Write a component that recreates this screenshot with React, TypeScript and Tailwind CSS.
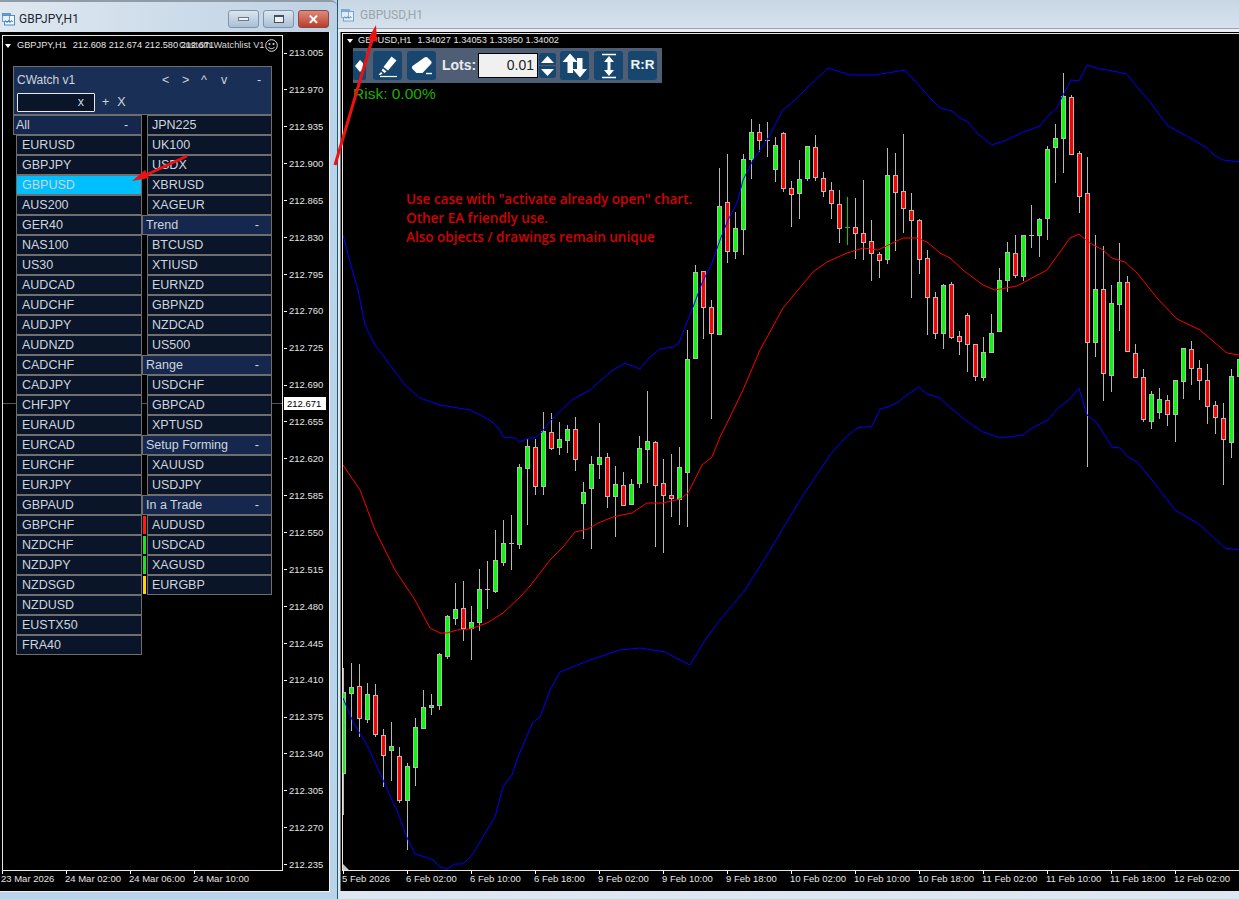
import React from 'react';

// [high, bodyTop, bodyBottom, low, kind]  kind: 1 bull, -1 bear, 0 doji, 2 green doji
const candles: [number, number, number, number, number][] = [
  [668, 692, 773, 815, 1], [663, 687, 693, 731, 1], [664, 686, 718, 737, -1], [683, 694, 719, 723, 1],
  [684, 695, 734, 737, -1], [729, 735, 755, 787, -1], [722, 746, 750, 781, 1], [747, 756, 800, 803, -1],
  [763, 766, 800, 850, 1], [718, 727, 767, 786, 1], [690, 707, 728, 729, 1], [694, 705, 707, 715, 1],
  [653, 654, 705, 710, 1], [615, 616, 656, 659, 1], [583, 609, 618, 625, 1], [581, 608, 628, 641, -1],
  [606, 622, 628, 660, 1], [569, 589, 622, 631, 1], [561, 589, 589, 609, 0], [530, 560, 591, 593, 1],
  [520, 543, 562, 566, 1], [515, 543, 543, 570, 0], [464, 467, 544, 549, 1], [439, 446, 468, 525, 1],
  [439, 447, 486, 495, -1], [412, 431, 486, 495, 1], [413, 432, 448, 450, -1], [422, 439, 447, 455, 1],
  [425, 429, 440, 453, 1], [417, 429, 459, 471, -1], [482, 492, 503, 539, 1], [456, 464, 488, 549, 1],
  [423, 457, 464, 479, 1], [453, 457, 496, 508, -1], [466, 484, 496, 537, 1], [472, 485, 505, 505, -1],
  [479, 484, 504, 505, 1], [436, 448, 483, 488, 1], [391, 441, 449, 483, 1], [441, 442, 485, 547, -1],
  [459, 483, 495, 553, -1], [454, 495, 498, 517, -1], [447, 467, 499, 525, 1], [330, 359, 472, 527, 1],
  [265, 272, 358, 358, 1], [271, 271, 307, 339, -1], [300, 307, 333, 419, -1], [168, 206, 334, 334, 1],
  [154, 202, 251, 263, -1], [212, 228, 251, 259, 1], [154, 159, 229, 255, 1], [119, 132, 159, 179, 1],
  [124, 132, 140, 152, -1], [122, 140, 140, 157, 0], [137, 145, 169, 182, 1], [132, 133, 188, 192, -1],
  [181, 188, 194, 227, -1], [160, 179, 193, 219, 1], [146, 146, 178, 181, 1], [135, 147, 177, 181, -1],
  [172, 178, 191, 197, -1], [182, 190, 203, 219, -1], [190, 204, 228, 243, -1], [197, 227, 227, 245, 2],
  [198, 227, 233, 259, -1], [180, 233, 242, 260, -1], [220, 241, 253, 281, -1], [252, 254, 260, 278, -1],
  [148, 175, 259, 264, 1], [153, 175, 192, 251, -1], [134, 191, 208, 233, -1], [193, 210, 220, 298, -1],
  [219, 220, 259, 274, -1], [250, 258, 297, 335, -1], [292, 297, 333, 339, -1], [284, 285, 333, 349, 1],
  [282, 284, 337, 339, -1], [331, 336, 341, 355, -1], [313, 315, 344, 372, -1], [344, 344, 376, 381, -1],
  [337, 352, 377, 381, 1], [314, 333, 352, 353, 1], [268, 280, 331, 332, 1], [242, 252, 280, 292, 1],
  [235, 253, 275, 278, -1], [235, 235, 276, 281, 1], [205, 235, 235, 248, 0], [218, 219, 235, 257, 1],
  [146, 149, 218, 240, 1], [124, 138, 147, 183, 1], [73, 96, 138, 173, 1], [95, 97, 154, 155, -1],
  [151, 153, 196, 213, -1], [157, 193, 342, 467, -1], [235, 289, 342, 357, 1], [246, 289, 373, 401, -1],
  [285, 303, 375, 392, 1], [243, 282, 304, 331, 1], [276, 282, 351, 351, -1], [344, 353, 377, 377, -1],
  [369, 377, 419, 422, -1], [391, 394, 421, 429, 1], [388, 399, 412, 419, 1], [395, 400, 414, 426, -1],
  [380, 380, 414, 442, 1], [348, 348, 381, 399, 1], [341, 349, 368, 385, -1], [360, 368, 380, 400, -1],
  [364, 380, 406, 424, -1], [401, 405, 417, 434, -1], [403, 418, 439, 485, -1], [369, 376, 442, 458, 1],
  [340, 359, 376, 400, 1],
];

const upperBand =
  '343,235 350,262 358,290 365,325 375,345 390,365 405,385 420,398 440,405 470,410 490,420 500,430 503,437 515,438 519,442 530,438 535,438 541,433 551,420 572,400 590,390 610,372 625,363 640,369 650,357 660,349 673,347 679,343 685,327 693,307 702,283 712,263 720,240 728,220 737,203 743,180 753,160 767,140 783,110 795,100 810,85 828,68 850,75 875,75 905,70 932,100 940,108 952,111 960,118 968,122 977,133 992,145 1007,140 1023,132 1040,126 1047,117 1057,108 1063,95 1071,80 1079,81 1087,65 1100,69 1113,71 1127,74 1137,87 1150,102 1168,126 1187,136 1207,148 1215,156 1223,160 1239,162';
const middleBand =
  '343,465 360,490 375,530 395,570 415,600 430,628 440,633 447,633 457,630 470,629 487,623 503,613 520,597 530,586 550,560 563,547 575,532 588,529 598,523 613,517 632,513 647,503 663,503 680,499 688,493 702,465 712,457 720,437 730,417 743,390 760,350 783,308 813,272 827,262 847,253 863,248 878,250 903,238 917,238 927,242 940,253 950,258 963,270 983,285 995,290 1017,286 1047,270 1070,238 1079,234 1088,242 1103,250 1112,258 1125,262 1137,273 1157,298 1177,319 1200,330 1227,353 1239,355';
const lowerBand =
  '343,698 353,722 368,747 383,780 398,813 408,840 415,854 432,859 440,867 447,869 455,864 463,864 472,855 495,817 503,787 512,775 518,757 533,722 540,717 550,690 560,672 590,660 620,650 640,648 665,652 690,665 705,640 720,620 745,590 770,550 800,500 830,455 843,440 857,428 872,426 880,409 888,407 897,403 907,395 919,387 927,394 940,398 952,409 968,422 983,432 1000,438 1023,435 1032,428 1048,420 1057,409 1070,399 1079,388 1087,415 1097,423 1112,447 1120,448 1128,457 1137,462 1152,480 1175,510 1200,525 1225,548 1239,550';

const prices = [
  '213.005', '212.970', '212.935', '212.900', '212.865', '212.830', '212.795', '212.760', '212.725', '212.690', '212.655', '212.620',
  '212.585', '212.550', '212.515', '212.480', '212.445', '212.410', '212.375', '212.340', '212.305', '212.270', '212.235',
];

const leftList = [
  'EURUSD', 'GBPJPY', 'GBPUSD', 'AUS200', 'GER40', 'NAS100', 'US30', 'AUDCAD', 'AUDCHF', 'AUDJPY', 'AUDNZD', 'CADCHF', 'CADJPY', 'CHFJPY',
  'EURAUD', 'EURCAD', 'EURCHF', 'EURJPY', 'GBPAUD', 'GBPCHF', 'NZDCHF', 'NZDJPY', 'NZDSGD', 'NZDUSD', 'EUSTX50', 'FRA40',
];

type RightRow = { label: string; header?: boolean; strip?: string };
const rightList: RightRow[] = [
  { label: 'JPN225' }, { label: 'UK100' }, { label: 'USDX' }, { label: 'XBRUSD' }, { label: 'XAGEUR' },
  { label: 'Trend', header: true },
  { label: 'BTCUSD' }, { label: 'XTIUSD' }, { label: 'EURNZD' }, { label: 'GBPNZD' }, { label: 'NZDCAD' }, { label: 'US500' },
  { label: 'Range', header: true },
  { label: 'USDCHF' }, { label: 'GBPCAD' }, { label: 'XPTUSD' },
  { label: 'Setup Forming', header: true },
  { label: 'XAUUSD' }, { label: 'USDJPY' },
  { label: 'In a Trade', header: true },
  { label: 'AUDUSD', strip: 'bg-[#ff1a1a]' }, { label: 'USDCAD', strip: 'bg-[#1fe01f]' }, { label: 'XAGUSD', strip: 'bg-[#1fe01f]' }, { label: 'EURGBP', strip: 'bg-[#ffd800]' },
];

const WindowIcon = ({ faded }: { faded?: boolean }) => (
  <svg width="13" height="14" viewBox="0 0 13 14" className={faded ? 'opacity-70' : ''}>
    <rect x="0.5" y="1.5" width="8" height="3" fill="#5b9bd8" stroke="#3c78b8" strokeWidth="0.6" />
    <rect x="2.5" y="3.5" width="10" height="9.5" fill="#f4f8fc" stroke="#4f8ac6" />
    <rect x="0.5" y="3.5" width="7" height="6" fill="#e8f1fa" stroke="#4f8ac6" strokeWidth="0.8" />
    <path d="M3.5 8.5l1.5 2 1.5-2 1.5 2 1.5-2 1 1.5" fill="none" stroke="#2d6fb4" strokeWidth="1" />
  </svg>
);

const CaptionButton = ({ children, close }: { children: React.ReactNode; close?: boolean }) => (
  <div
    className={`w-[31px] h-[18px] rounded-[3px] border flex items-center justify-center ${
      close ? 'border-[#8a4a44] bg-linear-to-b from-[#dc8a7c] to-[#bb3a2a]' : 'border-[#7f95ab] bg-linear-to-b from-[#dbe6f0] to-[#a9bfd4]'
    }`}
  >
    {children}
  </div>
);

const PanelRow = ({ label, active, inset }: { label: string; active?: boolean; inset: string }) => (
  <div className={`h-[20px] flex-1 flex items-center border border-[#6e6e6e] ${inset} ${active ? 'bg-[#00bfff]' : 'bg-[#0b1529]'}`}>
    {label}
  </div>
);

const PanelHeader = ({ label, dashClass, inset }: { label: string; dashClass: string; inset: string }) => (
  <div className={`h-[20px] flex items-center border border-[#6e6e6e] bg-[#16274d] ${inset}`}>
    <span>{label}</span>
    <span className={dashClass}>-</span>
  </div>
);

const Watchlist = () => (
  <div className="absolute left-[10px] top-[30px] w-[259px] text-[12.5px] text-[#cdd5dd] leading-none">
    <div className="h-[49px] border border-[#6e6e6e] bg-[#1a2f55] pl-[3px] pt-[7px]">
      <div className="flex h-[12px] items-center">
        <span className="w-[145px] text-[12px]">CWatch v1</span>
        <span className="w-[20px]">&lt;</span>
        <span className="w-[19px]">&gt;</span>
        <span className="w-[20px]">^</span>
        <span className="w-[36px]">v</span>
        <span>-</span>
      </div>
      <div className="flex items-center mt-[7px]">
        <div className="w-[78px] h-[19px] rounded-[1px] border border-[#e8e8e8] bg-[#0b1529] flex items-center justify-end pr-[10px]">x</div>
        <span className="ml-[7px]">+</span>
        <span className="ml-[8px]">X</span>
      </div>
    </div>
    <div className="flex">
      <div className="w-[129px] flex flex-col">
        <PanelHeader label="All" dashClass="ml-[94px]" inset="pl-[2px]" />
        {leftList.map((s) => (
          <div key={s} className="flex pl-[3px]">
            <PanelRow label={s} active={s === 'GBPUSD'} inset="pl-[5px]" />
          </div>
        ))}
      </div>
      <div className="w-[130px] flex flex-col">
        {rightList.map((r) =>
          r.header ? (
            <PanelHeader key={r.label} label={r.label} dashClass="ml-auto mr-[12px]" inset="pl-[3px]" />
          ) : (
            <div key={r.label} className="flex items-stretch">
              <div className="w-[5px] flex pl-px">
                {r.strip && <div className={`w-[3px] h-[18px] mt-px ${r.strip}`} />}
              </div>
              <PanelRow label={r.label} inset="pl-[4px]" />
            </div>
          ),
        )}
      </div>
    </div>
  </div>
);

const ToolButton = ({ children, className }: { children: React.ReactNode; className: string }) => (
  <div className={`w-[29px] h-[29px] rounded-[3px] bg-[#17476f] flex items-center justify-center ${className}`}>{children}</div>
);

const Toolbar = () => (
  <div className="absolute left-[10px] top-[14px] w-[309px] h-[35px] bg-[#4f5d75] flex items-center">
    <div className="w-[13px] h-[29px] rounded-[2px] bg-[#17476f] flex items-center overflow-hidden">
      <svg width="13" height="18" viewBox="0 0 13 18">
        <path d="M2 9l5-6 3 3v6l-3 3z" fill="#fff" />
      </svg>
    </div>
    <ToolButton className="ml-[7px]">
      <svg width="22" height="24" viewBox="0 0 22 24">
        <path d="M14.5 2.5l5 4-8.5 10-4.5-3.5z" fill="#fff" />
        <path d="M6 14.5l3.5 3-2 1.5-3-2.5z" fill="#fff" />
        <path d="M4 18l1.5 1.5-2 1.5H1.5z" fill="#fff" />
        <path d="M3 22.5h17" stroke="#fff" strokeWidth="1.2" />
      </svg>
    </ToolButton>
    <ToolButton className="ml-[5px]">
      <svg width="24" height="22" viewBox="0 0 24 22">
        <path d="M14.5 2.5c1-.8 2-.8 3 0l3.5 3.5c.8 1 .8 2 0 3L12.5 18H6.5l-4-4c-.8-1-.8-2 0-3z" fill="#fff" />
        <path d="M16 18.5h6" stroke="#fff" strokeWidth="1.4" />
      </svg>
    </ToolButton>
    <span className="ml-[6px] w-[36px] text-[14px] font-bold text-[#e8ecf0]">Lots:</span>
    <div className="w-[60px] h-[25px] border border-black bg-[#f0f0f0] flex items-center justify-end pr-[3px] text-[14px] text-[#222]">0.01</div>
    <div className="ml-px w-[17px] flex flex-col gap-px">
      <div className="h-[12px] rounded-t-[3px] bg-[#17476f] flex items-center justify-center">
        <svg width="13" height="7" viewBox="0 0 13 7"><path d="M6.5 0l6.5 7H0z" fill="#fff" /></svg>
      </div>
      <div className="h-[12px] rounded-b-[3px] bg-[#17476f] flex items-center justify-center">
        <svg width="13" height="7" viewBox="0 0 13 7"><path d="M0 0h13L6.5 7z" fill="#fff" /></svg>
      </div>
    </div>
    <ToolButton className="ml-[4px]">
      <svg width="26" height="25" viewBox="0 0 26 25">
        <path d="M8 0.500l7.500 8.500h-4.500v11h-5.500V9H0.500z" fill="#fff" />
        <path d="M18 24.500l-7.500-8.500h4.500V5h5.500v11h4.500z" fill="#fff" />
      </svg>
    </ToolButton>
    <ToolButton className="ml-[5px]">
      <svg width="18" height="26" viewBox="0 0 18 26">
        <path d="M2 1.500h14M2 24.500h14" stroke="#fff" strokeWidth="1.5" />
        <path d="M9 3l5 6h-3.500v8H14l-5 6-5-6h3.500V9H4z" fill="#fff" />
      </svg>
    </ToolButton>
    <ToolButton className="ml-[5px] text-[13.5px] font-bold text-[#f2f4f6]">R:R</ToolButton>
  </div>
);

const TimeAxis = ({ labels, className }: { labels: string[]; className?: string }) => (
  <div className={`flex text-[9.5px] leading-none text-[#e4e4e4] ${className ?? ''}`}>
    {labels.map((t) => (
      <div key={t} className="w-16 shrink-0 flex flex-col">
        <div className="w-px h-[3px] bg-white" />
        <span className="-ml-px whitespace-nowrap">{t}</span>
      </div>
    ))}
  </div>
);

const CandleChart = () => (
  <svg width="896" height="836" viewBox="343 34 896 836" className="block">
    {candles.map(([h, t, b, l, k], i) => {
      const x = 343 + i * 8;
      if (k === 0 || k === 2) {
        const c = k === 2 ? '#00d000' : '#b8b8b8';
        return (
          <g key={i} shapeRendering="crispEdges">
            <rect x={x} y={h} width="1" height={l - h} fill={c} />
            <rect x={x - 2} y={t} width="5" height="1" fill={c} />
          </g>
        );
      }
      return (
        <g key={i} shapeRendering="crispEdges">
          <rect x={x} y={h} width="1" height={l - h} fill="#b8b8b8" />
          <rect x={x - 1.5} y={t + 0.5} width="4" height={b - t} fill={k === 1 ? '#00ff00' : '#ff0000'} stroke="#b8b8b8" />
        </g>
      );
    })}
    <polyline points={upperBand} fill="none" stroke="#0000ff" strokeWidth="1" />
    <polyline points={middleBand} fill="none" stroke="#ff0000" strokeWidth="1" />
    <polyline points={lowerBand} fill="none" stroke="#0000ff" strokeWidth="1" />
    <path d="M343 864l6 6h-6z" fill="#c8c8c8" />
  </svg>
);

export default function App() {
  return (
    <div className="relative w-[1239px] h-[899px] overflow-hidden flex bg-[#dce7f2] font-['Liberation_Sans',sans-serif]">
      {/* GBPJPY window */}
      <div className="w-[338px] h-full shrink-0 flex flex-col bg-[#b9d3ea] border-r border-[#1d5a6a]">
        <div className="h-[32px] shrink-0 flex items-center pl-[2px] pr-[8px] pt-[4px] rounded-tr-[6px] border-t-2 border-[#8f9ba6] bg-linear-to-r from-[#dfe8f0] to-[#bdd1e4]">
          <WindowIcon />
          <span className="ml-[4px] text-[12px] font-['Roboto',sans-serif] text-[#1c2733]">GBPJPY,H1</span>
          <div className="ml-auto flex gap-[4px]">
            <CaptionButton>
              <div className="w-[11px] h-[4px] bg-[#eef2f6] border border-[#6c7a88]" />
            </CaptionButton>
            <CaptionButton>
              <div className="w-[10px] h-[8px] border border-[#44505c] bg-[#eef2f6] border-t-2" />
            </CaptionButton>
            <CaptionButton close>
              <span className="text-[13px] font-bold text-white leading-none">✕</span>
            </CaptionButton>
          </div>
        </div>
        <div className="w-[330px] h-[860px] shrink-0 bg-black border-r border-b border-[#f0f0f0] pl-[2px] pt-[3px]">
          <div className="flex">
            <div className="relative w-[281px] h-[836px] shrink-0 border border-[#e8e8e8]">
              <div className="absolute left-0 right-0 top-[367px] h-px bg-[#555]" />
              <div className="absolute left-[2px] top-[5px] flex items-center text-[9.25px] leading-none text-[#e4e4e4] whitespace-nowrap">
                <div className="w-0 h-0 border-x-[3.5px] border-x-transparent border-t-[4px] border-t-white mr-[6px]" />
                <span>GBPJPY,H1</span>
                <span className="ml-[6px]">212.608 212.674 212.580 212.671</span>
              </div>
              <span className="absolute left-[176px] top-[5px] text-[9.25px] leading-none text-[#d8d8d8] whitespace-nowrap">Custom Watchlist V1</span>
              <svg width="13" height="13" viewBox="0 0 13 13" className="absolute left-[262px] top-[3px]">
                <circle cx="6.5" cy="6.5" r="5.800" fill="none" stroke="#e0e0e0" />
                <circle cx="4.500" cy="5" r="1" fill="#e0e0e0" />
                <circle cx="8.500" cy="5" r="1" fill="#e0e0e0" />
                <path d="M3.500 8c1 2.200 5 2.200 6 0" fill="none" stroke="#e0e0e0" />
              </svg>
              <Watchlist />
              {/* current price tag sits over the axis */}
              <div className="absolute left-[281px] top-[361px] w-[42px] h-[13px] bg-white text-black text-[9.5px] leading-[13px] pl-[3px]">212.671</div>
            </div>
            <div className="pt-[12px] flex flex-col gap-[24.9px] text-[9.5px] leading-none text-[#e4e4e4]">
              {prices.map((p) => (
                <div key={p} className="h-[12px] flex items-center">
                  <div className="w-[3px] h-px bg-white mr-[2px] ml-px" />
                  <span>{p}</span>
                </div>
              ))}
            </div>
          </div>
          <TimeAxis labels={['23 Mar 2026', '24 Mar 02:00', '24 Mar 06:00', '24 Mar 10:00']} />
        </div>
      </div>

      {/* GBPUSD window */}
      <div className="flex-1 min-w-0 h-full flex flex-col">
        <div className="h-[32px] shrink-0 flex items-center pl-[3px] pt-px border-b-[3px] border-[#e8eef4] bg-linear-to-b from-[#c8d7e5] to-[#d6e2ed] shadow-[inset_0_-1px_0_#9aa6b0]">
          <WindowIcon faded />
          <span className="ml-[6px] text-[12px] font-['Roboto',sans-serif] text-[#9aa3ab]">GBPUSD,H1</span>
        </div>
        <div className="ml-[2px] h-[859px] shrink-0 bg-black pl-px border-l border-[#777]">
          <div className="relative mt-px w-[897px] h-[838px] border-l border-y border-[#e8e8e8]">
            <CandleChart />
            <div className="absolute left-[4px] top-[2px] flex items-center text-[9.25px] leading-none text-[#e4e4e4] whitespace-nowrap">
              <div className="w-0 h-0 border-x-[3.5px] border-x-transparent border-t-[4px] border-t-white mr-[5px]" />
              <span>GBPUSD,H1</span>
              <span className="ml-[6px]">1.34027 1.34053 1.33950 1.34002</span>
            </div>
            <Toolbar />
            <span className="absolute left-[10px] top-[51px] text-[15.5px] leading-[18px] text-[#1fae00]">Risk: 0.00%</span>
            <div className="absolute left-[63px] top-[156px] text-[13.5px] leading-[19px] font-semibold text-[#d40000] font-['Open_Sans',sans-serif] whitespace-nowrap">
              <div>Use case with "activate already open" chart.</div>
              <div>Other EA friendly use.</div>
              <div>Also objects / drawings remain unique</div>
            </div>
          </div>
          <TimeAxis
            className="ml-px"
            labels={[
              '5 Feb 2026', '6 Feb 02:00', '6 Feb 10:00', '6 Feb 18:00', '9 Feb 02:00', '9 Feb 10:00', '9 Feb 18:00',
              '10 Feb 02:00', '10 Feb 10:00', '10 Feb 18:00', '11 Feb 02:00', '11 Feb 10:00', '11 Feb 18:00', '12 Feb 02:00',
            ]}
          />
        </div>
      </div>

      {/* annotation arrows drawn on top of the screenshot */}
      <svg className="absolute inset-0 pointer-events-none" width="1239" height="899" viewBox="0 0 1239 899">
        <path d="M187 156L146 175" stroke="#ee1111" strokeWidth="3" />
        <path d="M132 181l13-11 4 8z" fill="#ee1111" />
        <path d="M335 165L372 40" stroke="#ee1111" strokeWidth="3" />
        <path d="M376 25l1 17-9-3z" fill="#ee1111" />
      </svg>
    </div>
  );
}
